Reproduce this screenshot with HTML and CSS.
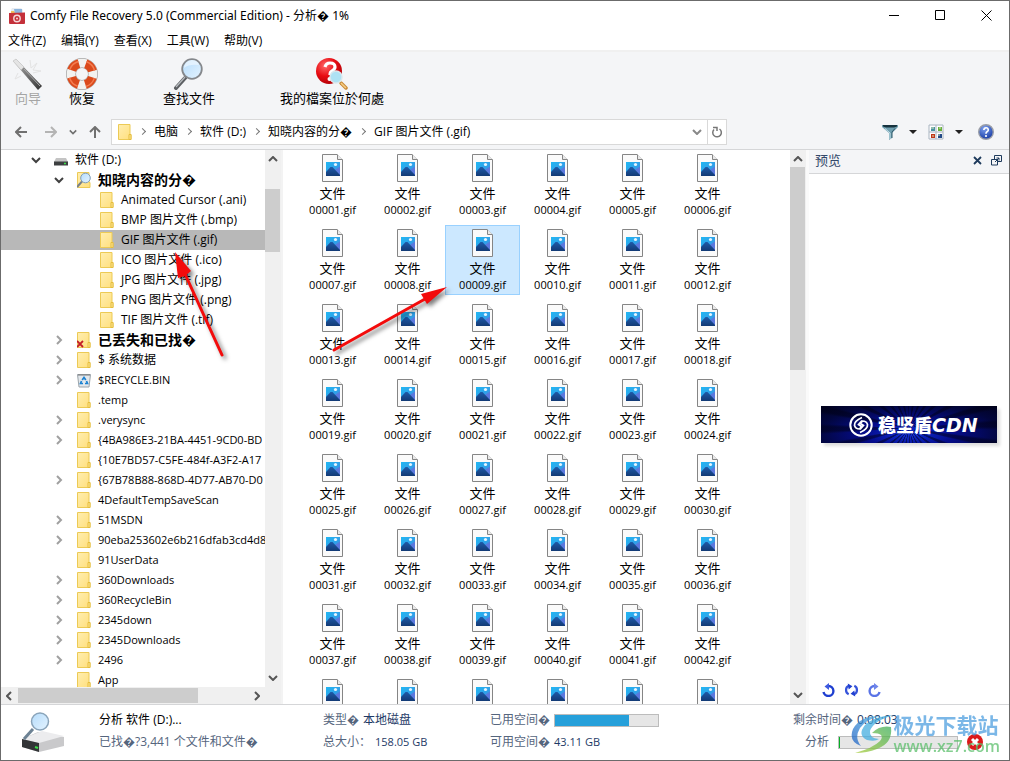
FILE: index.html
```
<!DOCTYPE html>
<html lang="zh-CN">
<head>
  <meta charset="UTF-8">
  <title>Comfy File Recovery 5.0</title>
  <link rel="stylesheet" href="styles.css">
</head>
<body>
  <!-- shared icons -->
  <svg class="sprite" aria-hidden="true">
    <defs>
      <linearGradient id="gFolder" x1="0" y1="0" x2="1" y2="1">
        <stop offset="0" stop-color="#ffeeb0"/><stop offset="1" stop-color="#ffdf7c"/>
      </linearGradient>
      <linearGradient id="gSky" x1="0" y1="0" x2="1" y2="1">
        <stop offset="0" stop-color="#1fb6f2"/><stop offset="1" stop-color="#3f8fe0"/>
      </linearGradient>
      <linearGradient id="gHill" x1="0" y1="0" x2="0" y2="1">
        <stop offset="0" stop-color="#1e5aa8"/><stop offset="1" stop-color="#123a75"/>
      </linearGradient>
      <linearGradient id="gLens" x1="0" y1="0" x2="1" y2="1">
        <stop offset="0" stop-color="#b5dcfb"/><stop offset="1" stop-color="#e4f3ff"/>
      </linearGradient>
      <linearGradient id="gWand" x1="0" y1="0" x2="1" y2="1">
        <stop offset="0" stop-color="#d8d8d8"/><stop offset=".35" stop-color="#888"/><stop offset="1" stop-color="#333"/>
      </linearGradient>
      <radialGradient id="gRed" cx=".35" cy=".3" r=".8">
        <stop offset="0" stop-color="#ff6a6a"/><stop offset=".5" stop-color="#e80c12"/><stop offset="1" stop-color="#a80006"/>
      </radialGradient>
      <radialGradient id="gHelp" cx=".4" cy=".25" r=".8">
        <stop offset="0" stop-color="#7fa2f0"/><stop offset="1" stop-color="#1236a0"/>
      </radialGradient>
      <linearGradient id="gSwirl" x1="1" y1="0" x2="0" y2="1">
        <stop offset="0" stop-color="#4fb4e4"/><stop offset="1" stop-color="#1d5fc4"/>
      </linearGradient>
      <linearGradient id="gLeaf" x1="0" y1="1" x2="1" y2="0">
        <stop offset="0" stop-color="#a8cc3a"/><stop offset="1" stop-color="#3fae5c"/>
      </linearGradient>
    </defs>
    <symbol id="folder" viewBox="0 0 14 16">
      <path d="M.5.5h11.500v10h1v5H.5z" fill="url(#gFolder)" stroke="#ecca55"/>
      <path d="M11 15.500v-5h2v5z" fill="#ffe793" stroke="#e5bd3e"/>
    </symbol>
    <symbol id="folder-x" viewBox="0 0 14 16">
      <path d="M.5.5h11.500v10h1v5H.5z" fill="url(#gFolder)" stroke="#ecca55"/>
      <path d="M11 15.500v-5h2v5z" fill="#ffe793" stroke="#e5bd3e"/>
      <path d="M0 9l6 6M6 9l-6 6" stroke="#c41e28" stroke-width="1.800"/>
    </symbol>
    <symbol id="folder-find" viewBox="0 0 14 16">
      <path d="M.5.5h11.500v10h1v5H.5z" fill="url(#gFolder)" stroke="#ecca55"/>
      <path d="M5 9.500L0 15" stroke="#777f88" stroke-width="2"/>
      <circle cx="8.500" cy="6" r="4.800" fill="url(#gLens)" stroke="#7f9db8"/>
    </symbol>
    <symbol id="bin" viewBox="0 0 14 16">
      <path d="M.5 2.500h13l-1.500 12.500H2z" fill="#e3e8ec" stroke="#9aa3aa"/>
      <path d="M1 3h12" stroke="#777"/>
      <path d="M5.200 8L7 5.500 8.800 8M9.500 9l1 2.500H8M6 11.500H3.500l1-2.500" fill="none" stroke="#1c82d2" stroke-width="1.700"/>
    </symbol>
    <symbol id="drive" viewBox="0 0 14 16">
      <path d="M2 6h10l2 4H0z" fill="#c4c4c4"/>
      <path d="M0 9.500h14v4H0z" fill="#3d3f41"/>
      <path d="M10 11.500h2" stroke="#3ce04a" stroke-width="1.500"/>
    </symbol>
    <symbol id="picture" viewBox="0 0 21 28">
      <path d="M.5.500h14.500l5.500 5.500v21.500H.5z" fill="#fafafa" stroke="#858585"/>
      <path d="M15.500.500v5h5" fill="#e8e8e8" stroke="#858585"/>
      <path d="M4 8h14v14H4z" fill="url(#gSky)"/>
      <path d="M18 12.500V22h-6l-2-4z" fill="#5b78dd"/>
      <path d="M4 18l4.500-5h2l7.500 8v1H4z" fill="url(#gHill)"/>
      <circle cx="13.500" cy="10.500" r="1.600" fill="#e6f5ff"/>
    </symbol>
    <symbol id="up" viewBox="0 0 10 6"><path d="M1 5l4-4 4 4" fill="none" stroke="currentColor" stroke-width="2"/></symbol>
    <symbol id="down" viewBox="0 0 10 6"><path d="M1 1l4 4 4-4" fill="none" stroke="currentColor" stroke-width="2"/></symbol>
    <symbol id="right" viewBox="0 0 6 10"><path d="M1 1l4 4-4 4" fill="none" stroke="currentColor" stroke-width="2"/></symbol>
    <symbol id="left" viewBox="0 0 6 10"><path d="M5 1L1 5l4 4" fill="none" stroke="currentColor" stroke-width="2"/></symbol>
    <symbol id="caret" viewBox="0 0 8 4"><path d="M0 0h8L4 4z" fill="#222"/></symbol>
    <symbol id="arrow" viewBox="0 0 12 12"><path d="M12 6H1M6 1L1 6l5 5" fill="none" stroke="currentColor" stroke-width="2"/></symbol>
  </svg>

  <div class="window">
    <header class="titlebar">
      <svg class="app-icon" viewBox="0 0 16 16">
        <path d="M3 0h9l2 2v5H2V2z" fill="#e8ecf2"/>
        <path d="M2 3h3l1 1h6v4H2z" fill="#f0c060"/>
        <path d="M5 1h8v5H6z" fill="#8cb4dc"/>
        <path d="M0 5l16-.5V15q0 1-1 1H1q-1 0-1-1z" fill="#c4303a"/>
        <circle cx="8" cy="10.500" r="3.200" fill="#c4303a" stroke="#f6d8da" stroke-width="1.400"/>
        <circle cx="8" cy="10.500" r="1" fill="#f6d8da"/>
      </svg>
      <h1>Comfy File Recovery 5.0 (Commercial Edition) - 分析� 1%</h1>
      <div class="window-buttons">
        <button aria-label="最小化"><svg viewBox="0 0 11 11"><path d="M0 5.500h10" stroke="#000"/></svg></button>
        <button aria-label="最大化"><svg viewBox="0 0 11 11"><path d="M.5.500h9v9h-9z" fill="none" stroke="#000"/></svg></button>
        <button aria-label="关闭"><svg viewBox="0 0 11 11"><path d="M.5.500l10 10M10.500.500l-10 10" stroke="#000"/></svg></button>
      </div>
    </header>

    <nav class="menubar">
      <button>文件(Z)</button>
      <button>编辑(Y)</button>
      <button>查看(X)</button>
      <button>工具(W)</button>
      <button>帮助(V)</button>
    </nav>

    <div class="toolbar">
      <button disabled>
        <svg viewBox="0 0 32 32">
          <path d="M18 2l1 8 6-5-4 7 8 1-8 2M6 15l-3 6 6-3" fill="none" stroke="#e3e3e3"/>
          <path d="M1 3L4 1l26 27-4 4z" fill="url(#gWand)"/>
          <path d="M1 3L4 1l8 8-3 3z" fill="#e4e4e4" stroke="#bbb" stroke-width=".5"/>
          <path d="M12 11l16 17" stroke="#aaa"/>
        </svg>
        向导
      </button>
      <button>
        <svg viewBox="0 0 32 32">
          <circle cx="16" cy="16" r="11" fill="none" stroke="#a8a8a8" stroke-width="10"/>
          <circle cx="16" cy="16" r="11" fill="none" stroke="#f2f2f0" stroke-width="8.500"/>
          <circle cx="16" cy="16" r="11" fill="none" stroke="#db4a1c" stroke-width="9" stroke-dasharray="10.280 7" stroke-dashoffset="-3.500"/>
          <circle cx="16" cy="16" r="13" fill="none" stroke="#f47c50" stroke-width="1.500" stroke-dasharray="12.150 8.270" stroke-dashoffset="-4.200"/>
        </svg>
        恢复
      </button>
      <button class="find">
        <svg viewBox="0 0 32 32">
          <path d="M12 20L3 30" stroke="#5c5f63" stroke-width="4" stroke-linecap="round"/>
          <path d="M12 19L3 29" stroke="#b8bcc0" stroke-width="1.200"/>
          <circle cx="19" cy="11" r="9.800" fill="url(#gLens)" stroke="#85888c" stroke-width="1.800"/>
          <path d="M11 10q5-4 15-3-1-5-7-5-7 0-8 8z" fill="#f0f8ff" opacity=".7"/>
        </svg>
        查找文件
      </button>
      <button>
        <svg viewBox="0 0 32 32">
          <circle cx="13" cy="13" r="13" fill="url(#gRed)"/>
          <path d="M9 9q1-4 5-4 5 0 5 4 0 2-3 4-2 1-2 4" fill="none" stroke="#fff" stroke-width="3.200"/>
          <circle cx="13.500" cy="21" r="2" fill="#fff"/>
          <path d="M25 25l5 5" stroke="#c98a38" stroke-width="3.500" stroke-linecap="round"/>
          <path d="M25 25l5 5" stroke="#f6cf86" stroke-width="1.500"/>
          <circle cx="20" cy="19" r="6" fill="#aee2f4" stroke="#d8e8ee" stroke-width="1.500"/>
        </svg>
        我的檔案位於何處
      </button>
    </div>

    <div class="navbar">
      <div class="history">
        <button aria-label="后退"><svg class="i12"><use href="#arrow"/></svg></button>
        <button aria-label="前进" class="faded"><svg class="i12 flip"><use href="#arrow"/></svg></button>
        <button aria-label="历史" class="recent"><svg class="i8"><use href="#down"/></svg></button>
        <button aria-label="上移"><svg class="i12 turn"><use href="#arrow"/></svg></button>
      </div>
      <div class="address">
        <svg class="folder-icon"><use href="#folder"/></svg>
        <a href="#">电脑</a>
        <a href="#">软件 (D:)</a>
        <a href="#">知晓内容的分�</a>
        <a href="#">GIF 图片文件 (.gif)</a>
        <button class="drop" aria-label="展开"><svg class="i10"><use href="#down"/></svg></button>
        <button class="refresh" aria-label="刷新">
          <svg class="i12" viewBox="0 0 12 12"><path d="M8.500 3a4.300 4.300 0 1 1-5.500.5M2 1.500h4V5" fill="none" stroke="#777" stroke-width="1.500"/></svg>
        </button>
      </div>
      <div class="tools">
        <button aria-label="筛选">
          <svg class="i16" viewBox="0 0 16 16">
            <path d="M0 1h16v2l-6 6v5l-3 2V9L0 3z" fill="#6f9fb0"/>
            <path d="M1 1h14v1.500l-3 1H4l-3-1z" fill="#16323e"/>
            <path d="M3 4.500l5 4.500v6" fill="none" stroke="#c9e2ea"/>
            <path d="M13 4.500L10 8v6" fill="none" stroke="#2f5868"/>
          </svg>
        </button>
        <button aria-label="筛选选项"><svg class="i8 caret"><use href="#caret"/></svg></button>
        <button aria-label="视图">
          <svg class="i16" viewBox="0 0 16 16">
            <path d="M1 1h14v14H1zM8 1v14M1 8h14" fill="#fff" stroke="#a9b4c0"/>
            <path d="M3 3h4v4H3z" fill="#4a92a0"/><path d="M10 3h4v4h-4z" fill="#68b03c"/>
            <path d="M3 10h4v4H3z" fill="#c03818"/><path d="M10 10h4v4h-4z" fill="#244c88"/>
            <path d="M3 4h3M12 3v2M4 12h2M10 11h2" stroke="#d8e8c0"/>
          </svg>
        </button>
        <button aria-label="视图选项"><svg class="i8 caret"><use href="#caret"/></svg></button>
        <button aria-label="帮助" class="help">
          <svg class="i16" viewBox="0 0 16 16">
            <circle cx="8" cy="8" r="7.300" fill="url(#gHelp)" stroke="#9a9ea8" stroke-width="1.400"/>
            <path d="M5.800 6q.3-2.200 2.300-2.200T10.300 6q0 1-1.300 1.800Q8 8.400 8 9.800" fill="none" stroke="#fff" stroke-width="1.600"/>
            <circle cx="8" cy="12" r="1.100" fill="#fff"/>
          </svg>
        </button>
      </div>
    </div>

    <main class="workspace">
      <aside class="side">
        <div class="side-body">
          <ul class="tree" id="tree" role="tree"></ul>
          <div class="vscroll side-scroll">
            <svg class="i10"><use href="#up"/></svg>
            <div class="track"><div class="thumb"></div></div>
            <svg class="i10"><use href="#down"/></svg>
          </div>
        </div>
        <div class="hscroll">
          <svg class="i6"><use href="#left"/></svg>
          <div class="track"><div class="thumb"></div></div>
          <svg class="i6"><use href="#right"/></svg>
        </div>
      </aside>

      <section class="files">
        <ul class="grid" id="files"></ul>
        <div class="vscroll file-scroll">
          <svg class="i10"><use href="#up"/></svg>
          <div class="track"><div class="thumb"></div></div>
          <svg class="i10"><use href="#down"/></svg>
        </div>
      </section>

      <aside class="preview">
        <div class="preview-head">
          <h2>预览</h2>
          <button aria-label="关闭预览"><svg viewBox="0 0 11 11"><path d="M2 2l7 7M9 2L2 9" stroke="#1e3a5c" stroke-width="1.800"/></svg></button>
          <button aria-label="浮动"><svg viewBox="0 0 11 11"><path d="M3.500 4V.500h7v6H7M.5 4.500h6v5.500h-6zM4 7l4-4M5.500 3H8v2.500" fill="none" stroke="#1e3a5c"/></svg></button>
        </div>
        <div class="preview-body">
          <div class="banner">
            <svg viewBox="0 0 24 24" fill="none" stroke="#fff">
              <circle cx="12" cy="12" r="10.700" stroke-width="2"/>
              <path d="M13 4.500Q5 8 5.500 12.500q1 3.500 5 3.500l2-2.500-3-2L13 7.500M11 19.500q8-3.500 7.500-8-1-3.500-5-3.500l-2 2.500 3 2L11 16.500" stroke-width="1.700"/>
            </svg>
            <span>稳坚盾<b>CDN</b></span>
          </div>
        </div>
        <div class="rotate">
          <button aria-label="向左旋转"><svg viewBox="0 0 14 14"><path d="M7 3A5 5 0 1 1 2 9" fill="none" stroke="#1f3fd0" stroke-width="2.400"/><path d="M3 3.500L7.500 0v7z" fill="#3f5be0"/></svg></button>
          <button aria-label="旋转 180 度"><svg viewBox="0 0 16 14"><path d="M5 2.500A5 5 0 0 0 5 11.500M11 11.500A5 5 0 0 0 11 2.500" fill="none" stroke="#3553da" stroke-width="2.400"/><path d="M4 0l5 3-4 3.500zM12 14l-5-3 4-3.500z" fill="#1f3fd0"/></svg></button>
          <button aria-label="向右旋转"><svg viewBox="0 0 14 14"><path d="M7 3A5 5 0 1 0 12 9" fill="none" stroke="#5a74e6" stroke-width="2.400"/><path d="M11 3.500L6.500 0v7z" fill="#6f86ea"/></svg></button>
        </div>
      </aside>

      <!-- red pointers over tree and files -->
      <svg class="pointers" width="460" height="220" viewBox="0 0 460 220">
        <path d="M221 205L184 124M333 200L424 149" stroke="#f30b0b" stroke-width="3" stroke-linecap="round"/>
        <path d="M174 102L177 128 184 126 190 121z" fill="#f30b0b"/>
        <path d="M446 137L420 144 423 149 426 154z" fill="#f30b0b"/>
      </svg>
    </main>

    <footer class="statusbar">
      <svg class="drive-icon" viewBox="0 0 42 40">
        <path d="M0 27l16-7 26 5v9L17 40 0 35z" fill="#c9c9cb"/>
        <path d="M0 27l20-8 22 5-25 7z" fill="#ececee"/>
        <path d="M0 27l17 4v9L0 35z" fill="#333537"/>
        <path d="M13 35l3 1" stroke="#3ce04a" stroke-width="2"/>
        <path d="M11 17L2 27" stroke="#6d8294" stroke-width="3"/>
        <circle cx="18" cy="9.500" r="8.500" fill="url(#gLens)" stroke="#8aa4ba" stroke-width="1.500"/>
      </svg>
      <div class="stat job">
        <p class="strong">分析 软件 (D:)...</p>
        <p>已找�?3,441 个文件和文件�</p>
      </div>
      <dl class="stat">
        <div><dt>类型�</dt><dd>本地磁盘</dd></div>
        <div><dt>总大小：</dt><dd class="size">158.05 GB</dd></div>
      </dl>
      <dl class="stat">
        <div><dt><label for="used">已用空间�</label></dt><dd><progress id="used" class="used" max="100" value="72"></progress></dd></div>
        <div><dt>可用空间�</dt><dd class="size">43.11 GB</dd></div>
      </dl>
      <div class="stat timing">
        <p>剩余时间� <b>0:08:03</b></p>
        <p class="scan">
          <label for="scan">分析</label>
          <progress id="scan" class="done" max="100" value="1"></progress>
          <button aria-label="停止">
            <svg class="i16" viewBox="0 0 16 16"><circle cx="8" cy="8" r="8" fill="#dc1a1a"/><path d="M5 5l6 6M11 5l-6 6" stroke="#fff" stroke-width="3"/></svg>
          </button>
        </p>
      </div>
      <div class="watermark">
        <svg viewBox="0 0 44 40">
          <path d="M30 2Q10 2 3 15q-5 12 8 17Q4 24 10 14 17 5 30 2z" fill="url(#gSwirl)"/>
          <path d="M44 1Q24 2 15 11q-8 10 2 15 8 2 12-1-10-1-9-8Q23 7 44 1z" fill="#45aee0"/>
          <path d="M22 19q8-8 19-6 2 16-14 22-10 4-22 4 18-5 25-12 6-8-8-8z" fill="url(#gLeaf)"/>
        </svg>
        <div>
          <strong>极光下载站</strong>
          <span>www.xz7.com</span>
        </div>
      </div>
    </footer>
  </div>

  <script src="script.js"></script>
</body>
</html>
```

FILE: styles.css
```
* {
  box-sizing: border-box;
}
body {
  margin: 0;
  font-family: "Open Sans", "Noto Sans CJK SC", sans-serif;
  font-size: 12px;
  line-height: 16px;
  color: #000;
}
h1, h2, p, ul, dl, dd {
  margin: 0;
  padding: 0;
  font-size: inherit;
  font-weight: normal;
}
ul {
  list-style: none;
}
button {
  display: flex;
  align-items: center;
  justify-content: center;
  padding: 0;
  border: none;
  background: none;
  font: inherit;
  color: inherit;
}
svg {
  flex: none;
}
.sprite {
  position: absolute;
  width: 0;
  height: 0;
}
.window {
  display: flex;
  flex-direction: column;
  height: 100vh;
  border: 1px solid #6b6b6b;
  background: #fff;
}

/* icon sizes */
.i6 { width: 6px; height: 10px; }
.i8 { width: 8px; height: 6px; }
.i10 { width: 10px; height: 6px; }
.i12 { width: 12px; height: 12px; }
.i16 { width: 16px; height: 16px; }
.caret { height: 4px; }
.flip { transform: scaleX(-1); }
.turn { transform: rotate(90deg); }
.folder-icon { width: 14px; height: 16px; }

/* title + menu */
.titlebar {
  display: flex;
  align-items: center;
  height: 29px;
  padding-left: 8px;
}
.titlebar h1 {
  font-family: "Noto Sans", "Noto Sans CJK SC", sans-serif;
}
.app-icon {
  width: 16px;
  height: 16px;
  margin-right: 5px;
}
.window-buttons {
  display: flex;
  margin-left: auto;
}
.window-buttons button {
  width: 46px;
  height: 29px;
}
.window-buttons svg {
  width: 11px;
  height: 11px;
}
.menubar {
  display: flex;
  gap: 15px;
  height: 22px;
  padding: 1px 7px 0;
  border-bottom: 2px solid #f0f0f0;
}

/* toolbar */
.toolbar {
  display: flex;
  height: 62px;
  padding-top: 6px;
  background: #f4f5f7;
}
.toolbar button {
  flex-direction: column;
  justify-content: flex-start;
  padding: 0 11px;
  font-size: 13px;
}
.toolbar button:disabled {
  color: #a5a5a5;
}
.toolbar .find {
  margin: 0 43px;
}
.toolbar svg {
  width: 32px;
  height: 32px;
}

/* address row */
.navbar {
  display: flex;
  align-items: center;
  height: 36px;
  padding: 0 15px 0 14px;
  border-bottom: 1px solid #d5d6d8;
  background: #f4f5f7;
}
.history {
  display: flex;
  gap: 18px;
  margin-right: 10px;
  color: #707070;
}
.history .faded {
  color: #b4b4b4;
}
.history .recent {
  margin: 0 -6px;
}
.address {
  display: flex;
  align-items: center;
  width: 616px;
  height: 26px;
  padding-left: 6px;
  border: 1px solid #d9d9d9;
  background: #fff;
}
.address a {
  color: #000;
  text-decoration: none;
  white-space: nowrap;
}
.address a::before {
  content: "";
  display: inline-block;
  width: 4px;
  height: 4px;
  margin: 0 9px 2px 8px;
  border: solid #777;
  border-width: 1px 1px 0 0;
  transform: rotate(45deg);
}
.address .drop {
  width: 20px;
  margin-left: auto;
  color: #888;
}
.address .refresh {
  width: 19px;
  height: 24px;
  border-left: 1px solid #d9d9d9;
}
.tools {
  display: flex;
  gap: 11px;
  margin-left: auto;
}
.tools .help {
  margin-left: 4px;
}

/* workspace */
.workspace {
  position: relative;
  display: flex;
  flex: 1;
  min-height: 0;
}
.side {
  display: flex;
  flex-direction: column;
  width: 282px;
  border-right: 2px solid #f3f3f3;
}
.side-body {
  display: flex;
  flex: 1;
  min-height: 0;
}
.tree {
  flex: 1;
  overflow: hidden;
  white-space: nowrap;
}
.tree li {
  display: flex;
  align-items: center;
  height: 20px;
}
.tree .level0 { padding-left: 30px; }
.tree .level1 { padding-left: 53px; font-size: 11px; }
.tree .level2 { padding-left: 76px; }
.tree .selected {
  background: #b8b8b8;
}
.tree .bold {
  font-size: 14px;
  font-weight: bold;
}
.tree .chevron {
  width: 10px;
  height: 10px;
  margin-right: 13px;
  color: #a0a0a0;
}
.tree .open {
  color: #404040;
}
.tree .folder-icon {
  margin-right: 7px;
}
.tree .cjk, .job .strong {
  font-size: 12px;
}
.vscroll, .hscroll {
  display: flex;
  flex: none;
  align-items: center;
  background: #f0f0f0;
  color: #555;
}
.vscroll {
  flex-direction: column;
  width: 16px;
  padding: 6px 0;
}
.vscroll .track {
  flex: 1;
  width: 100%;
  margin: 5px 0;
}
.vscroll .thumb {
  width: 15px;
  background: #cdcdcd;
}
.side-scroll .track { padding-top: 22px; }
.side-scroll .thumb { height: 63px; }
.file-scroll .thumb { height: 203px; }
.hscroll {
  height: 17px;
  padding: 0 21px 0 5px;
}
.hscroll .track {
  flex: 1;
  margin: 0 6px;
}
.hscroll .thumb {
  width: 180px;
  height: 15px;
  background: #cdcdcd;
}
.files {
  display: flex;
  flex: 1;
  min-width: 0;
}
.grid {
  display: grid;
  flex: 1;
  grid-template-columns: repeat(auto-fill, 75px);
  grid-auto-rows: 75px;
  padding: 0 40px 0 12px;
  overflow: hidden;
}
.grid li {
  width: 75px;
  height: 70px;
  padding-top: 3px;
  border: 1px solid transparent;
  text-align: center;
}
.grid li.selected {
  border-color: #99d1ff;
  background: #cce8ff;
}
.grid svg {
  display: block;
  width: 21px;
  height: 28px;
  margin: 0 auto 3px;
}
.grid span {
  display: block;
  font-size: 11px;
}
.grid .kind {
  font-size: 13px;
  line-height: 17px;
}

/* preview */
.preview {
  display: flex;
  flex-direction: column;
  width: 203px;
  border-left: 3px solid #fafafa;
}
.preview-head {
  display: flex;
  gap: 8px;
  align-items: center;
  height: 24px;
  padding: 0 7px 3px 6px;
  border-bottom: 1px solid #d5d6d8;
  background: #f4f5f7;
  color: #33486a;
}
.preview-head h2 {
  flex: 1;
  font-size: 13px;
}
.preview-head svg {
  width: 11px;
  height: 11px;
}
.preview-body {
  display: flex;
  flex: 1;
  align-items: center;
  justify-content: center;
}
.banner {
  display: flex;
  gap: 5px;
  align-items: center;
  width: 176px;
  height: 37px;
  padding-left: 28px;
  background:
    repeating-conic-gradient(from 0deg at 50% 60%, transparent 0 6deg, rgba(0, 0, 20, 0.5) 8deg 11deg, transparent 13deg),
    radial-gradient(ellipse at 50% 75%, #1030d8 0, #050c8c 35%, #02063c 75%, #010220 100%);
  box-shadow: 3px 3px 3px #ddd;
  color: #fff;
  font-size: 18px;
  font-weight: 900;
  white-space: nowrap;
}
.banner svg {
  width: 24px;
  height: 24px;
}
.banner b {
  font-family: "DejaVu Sans", sans-serif;
  font-size: 19px;
  font-style: oblique;
}
.rotate {
  display: flex;
  gap: 8px;
  align-items: flex-start;
  height: 29px;
  padding: 8px 12px 0;
}
.rotate svg {
  width: 15px;
  height: 14px;
}
.pointers {
  position: absolute;
  top: 0;
  left: 0;
  filter: drop-shadow(3px 3px 2px rgba(0, 0, 0, 0.5));
  pointer-events: none;
}

/* status bar */
.statusbar {
  position: relative;
  display: grid;
  grid-template-columns: 77px 224px 167px 1fr 216px;
  height: 56px;
  padding: 5px 0 0 21px;
  border-top: 1px solid #d5d6d8;
  color: #55657d;
  white-space: nowrap;
}
.drive-icon {
  width: 42px;
  height: 40px;
  margin-top: 2px;
}
.stat {
  display: flex;
  flex-direction: column;
  gap: 2px;
}
.stat > * {
  display: flex;
  align-items: center;
  height: 20px;
}
.stat dd, .stat b {
  color: #1e3a66;
  font-weight: normal;
}
.stat dt {
  margin-right: 4px;
}
.stat .size {
  font-size: 11px;
}
.job .strong {
  color: #000;
}
progress {
  appearance: none;
  border: 1px solid #bcbcbc;
  background: #e6e6e6;
}
progress::-webkit-progress-bar {
  background: #e6e6e6;
}
progress::-webkit-progress-value {
  background: #26a0da;
}
.used {
  display: block;
  width: 105px;
  height: 13px;
}
.done {
  width: 120px;
  height: 13px;
}
.done::-webkit-progress-value {
  background: #06b025;
}
.timing b {
  margin-left: 4px;
}
.scan {
  gap: 9px;
  padding-left: 12px;
}
.watermark {
  position: absolute;
  right: 9px;
  bottom: 5px;
  display: flex;
  align-items: center;
  opacity: 0.75;
  pointer-events: none;
}
.watermark svg {
  width: 44px;
  height: 40px;
}
.watermark strong, .watermark span {
  display: block;
}
.watermark strong {
  color: #4fa0e0;
  font-size: 21px;
  line-height: 24px;
}
.watermark span {
  color: #5cbf6c;
  font-size: 16px;
  font-weight: 600;
  line-height: 18px;
}
```

FILE: script.js
```
// [level, chevron, icon, label, extra classes]
const tree = [
  [0, 'down', 'drive', '软件 (D:)', 'cjk'],
  [1, 'down', 'folder-find', '知晓内容的分�', 'bold'],
  [2, '', 'folder', 'Animated Cursor (.ani)', ''],
  [2, '', 'folder', 'BMP 图片文件 (.bmp)', ''],
  [2, '', 'folder', 'GIF 图片文件 (.gif)', 'selected'],
  [2, '', 'folder', 'ICO 图片文件 (.ico)', ''],
  [2, '', 'folder', 'JPG 图片文件 (.jpg)', ''],
  [2, '', 'folder', 'PNG 图片文件 (.png)', ''],
  [2, '', 'folder', 'TIF 图片文件 (.tif)', ''],
  [1, 'right', 'folder-x', '已丢失和已找�', 'bold'],
  [1, 'right', 'folder', '$ 系统数据', 'cjk'],
  [1, 'right', 'bin', '$RECYCLE.BIN', ''],
  [1, '', 'folder', '.temp', ''],
  [1, 'right', 'folder', '.verysync', ''],
  [1, 'right', 'folder', '{4BA986E3-21BA-4451-9CD0-BD', ''],
  [1, '', 'folder', '{10E7BD57-C5FE-484f-A3F2-A17', ''],
  [1, 'right', 'folder', '{67B78B88-868D-4D77-AB70-D0', ''],
  [1, '', 'folder', '4DefaultTempSaveScan', ''],
  [1, 'right', 'folder', '51MSDN', ''],
  [1, 'right', 'folder', '90eba253602e6b216dfab3cd4d8', ''],
  [1, '', 'folder', '91UserData', ''],
  [1, 'right', 'folder', '360Downloads', ''],
  [1, 'right', 'folder', '360RecycleBin', ''],
  [1, 'right', 'folder', '2345down', ''],
  [1, 'right', 'folder', '2345Downloads', ''],
  [1, 'right', 'folder', '2496', ''],
  [1, '', 'folder', 'App', '']
];

document.getElementById('tree').innerHTML = tree.map(([level, chevron, icon, label, extra]) => `
  <li role="treeitem" class="level${level} ${extra}">
    <svg class="chevron ${chevron === 'down' ? 'open' : ''}">${chevron ? `<use href="#${chevron}"/>` : ''}</svg>
    <svg class="folder-icon"><use href="#${icon}"/></svg>
    <span>${label}</span>
  </li>`).join('');

let files = '';
for (let i = 1; i <= 48; i++) {
  const name = String(i).padStart(5, '0') + '.gif';
  files += `
  <li class="${i === 9 ? 'selected' : ''}">
    <svg><use href="#picture"/></svg>
    <span class="kind">文件</span>
    <span>${name}</span>
  </li>`;
}
document.getElementById('files').innerHTML = files;
```
